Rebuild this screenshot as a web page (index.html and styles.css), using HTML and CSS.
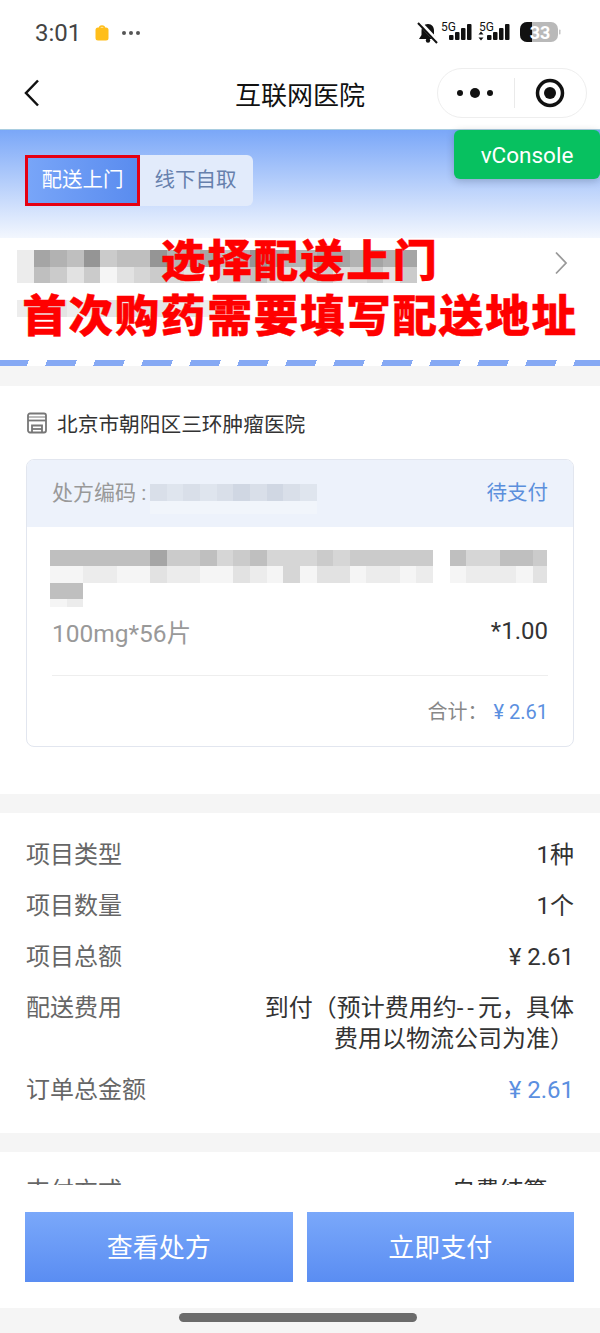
FILE: index.html
```html
<!DOCTYPE html>
<html lang="zh-CN">
<head>
  <meta charset="UTF-8">
  <meta name="viewport" content="width=device-width, initial-scale=1.0">
  <title>互联网医院</title>
  <link rel="stylesheet" href="styles.css">
</head>
<body>
  <div class="status-bar">
    <div class="status-left">
      <span class="time">3:01</span>
      <svg class="bag" width="14" height="16" viewBox="0 0 14 16"><path d="M4.500 3.500a2.500 2.500 0 0 1 5 0" fill="none" stroke="#ffbe1a" stroke-width="1.500"/><rect x="0.500" y="2.500" width="13" height="13" rx="2.500" fill="#ffbe1a"/></svg>
      <span class="status-dots"><i></i><i></i><i></i></span>
    </div>
    <svg class="status-icons" width="146" height="24" viewBox="0 0 146 24">
      <!-- muted bell -->
      <path d="M13 3c4 0 6 3 6 7v4l3 4H4l2.500-4v-4c0-4 2.500-7 6.500-7z" fill="#111"/>
      <circle cx="13" cy="19.500" r="2.200" fill="#111"/>
      <path d="M3 0l19 20" stroke="#fff" stroke-width="4.500"/>
      <path d="M3 2l19 20" stroke="#111" stroke-width="2"/>
      <!-- sim 1 -->
      <text x="26" y="9.500" class="net">5G</text>
      <rect x="34" y="14" width="4.500" height="5" rx="1" fill="#111"/>
      <rect x="40" y="11" width="4.500" height="8" rx="1" fill="#111"/>
      <rect x="46" y="7" width="4.500" height="12" rx="1" fill="#111"/>
      <rect x="52" y="3" width="4.500" height="16" rx="1" fill="#111"/>
      <!-- sim 2 -->
      <text x="64" y="9.500" class="net">5G</text>
      <path d="M66 10.500l2.500 3h-5zM66 19.500l2.500-3h-5z" fill="#111"/>
      <rect x="72" y="14" width="4.500" height="5" rx="1" fill="#111"/>
      <rect x="78" y="11" width="4.500" height="8" rx="1" fill="#111"/>
      <rect x="84" y="7" width="4.500" height="12" rx="1" fill="#111"/>
      <rect x="90" y="3" width="4.500" height="16" rx="1" fill="#111"/>
      <!-- battery -->
      <rect x="105" y="1" width="38" height="20" rx="7" fill="#b9b9b9"/>
      <path d="M112 1h5v20h-5a7 7 0 0 1-7-7V8a7 7 0 0 1 7-7z" fill="#111"/>
      <rect x="144" y="8.500" width="1.500" height="5" rx="0.700" fill="#c4c4c4"/>
      <text x="125" y="17.500" class="batt">33</text>
    </svg>
  </div>

  <div class="nav-bar">
    <svg class="back" width="16" height="28" viewBox="0 0 16 28"><path d="M14 1.500L2 14l12 12.500" fill="none" stroke="#111" stroke-width="2.500"/></svg>
    <div class="nav-title">互联网医院</div>
    <div class="capsule">
      <svg width="38" height="14" viewBox="0 0 38 14"><circle cx="4" cy="7" r="3" fill="#111"/><circle cx="19" cy="7" r="5" fill="#111"/><circle cx="34" cy="7" r="3" fill="#111"/></svg>
      <span class="capsule-line"></span>
      <svg width="30" height="30" viewBox="0 0 30 30"><circle cx="15" cy="15" r="12.500" fill="none" stroke="#111" stroke-width="3.500"/><circle cx="15" cy="15" r="6" fill="#111"/></svg>
    </div>
  </div>

  <div class="content">
    <div class="hero">
      <div class="tabs">
        <div class="tab tab-active">配送上门</div>
        <div class="tab">线下自取</div>
      </div>
    </div>

    <div class="address">
      <div class="mosaic-row">
        <i class="g1"></i><i class="g7"></i><i class="g6"></i><i class="g5"></i><i class="g8"></i><i class="g4"></i><i class="g5"></i><i class="g5"></i><i class="g8"></i><i class="g6"></i><i class="g6"></i><i class="g7"></i><i class="g5"></i><i class="g6"></i><i class="g8"></i><i class="g7"></i><i class="g6"></i><i class="g6"></i><i class="g7"></i><i class="g7"></i><i class="g6"></i><i class="g7"></i><i class="g6"></i><i class="g7"></i>
      </div>
      <div class="mosaic-row">
        <i class="g1"></i><i class="g5"></i><i class="g4"></i><i class="g2"></i><i class="g4"></i><i class="g0"></i><i class="g2"></i><i class="g3"></i><i class="g4"></i><i class="g3"></i><i class="g2"></i><i class="gap"></i><i class="g3"></i><i class="g4"></i><i class="g5"></i><i class="g3"></i><i class="g2"></i><i class="g3"></i><i class="g4"></i><i class="g2"></i><i class="g3"></i><i class="g4"></i><i class="g2"></i><i class="g4"></i>
      </div>
      <div class="mosaic-row address-third">
        <i class="g1"></i><i class="g1"></i><i class="g2"></i><i class="g1"></i><i class="g1"></i><i class="g2"></i><i class="g1"></i><i class="g2"></i><i class="g2"></i><i class="g1"></i><i class="g2"></i><i class="g1"></i>
      </div>
      <svg class="chevron" width="14" height="24" viewBox="0 0 14 24"><path d="M2 1.500L12 12 2 22.500" fill="none" stroke="#999" stroke-width="1.800"/></svg>
    </div>
    <div class="stripes"></div>

    <div class="divider"></div>

    <div class="section order">
      <div class="hospital">
        <svg width="22" height="22" viewBox="0 0 22 22" fill="none" stroke="#777" stroke-width="1.800"><rect x="2" y="1.500" width="18" height="19" rx="2"/><path d="M2 8.500h18"/><path d="M2 5h18" stroke-width="1"/><path d="M6 20.500v-7h10v7"/><path d="M6 17h10"/></svg>
        <span>北京市朝阳区三环肿瘤医院</span>
      </div>
      <div class="card">
        <div class="card-head">
          <div class="rx">
            <span>处方编码 :</span>
            <div class="rx-mosaic">
              <div class="mosaic-row">
                <i class="b2"></i><i class="b1"></i><i class="b2"></i><i class="b1"></i><i class="b2"></i><i class="b3"></i><i class="b2"></i><i class="b3"></i><i class="b2"></i><i class="b1"></i>
              </div>
              <div class="mosaic-row rx-second"><i class="b0"></i><i class="b0"></i><i class="b0"></i><i class="b0"></i><i class="b0"></i><i class="b0"></i><i class="b0"></i><i class="b0"></i><i class="b0"></i><i class="b0"></i></div>
            </div>
          </div>
          <span class="state">待支付</span>
        </div>
        <div class="card-body">
          <div class="mosaic-row">
            <i class="g5"></i><i class="g5"></i><i class="g5"></i><i class="g5"></i><i class="g5"></i><i class="g5"></i><i class="g7"></i><i class="g4"></i><i class="g4"></i><i class="g5"></i><i class="g3"></i><i class="g4"></i><i class="g5"></i><i class="g3"></i><i class="g3"></i><i class="g3"></i><i class="g4"></i><i class="g3"></i><i class="g4"></i><i class="g4"></i><i class="g4"></i><i class="g4"></i><i class="g4"></i><i class="gap"></i><i class="g5"></i><i class="g3"></i><i class="g3"></i><i class="g5"></i><i class="g5"></i><i class="g4"></i>
          </div>
          <div class="mosaic-row">
            <i class="g0"></i><i class="g0"></i><i class="g1"></i><i class="g1"></i><i class="g0"></i><i class="g0"></i><i class="g2"></i><i class="g1"></i><i class="g1"></i><i class="g0"></i><i class="g0"></i><i class="g2"></i><i class="g1"></i><i class="g0"></i><i class="g3"></i><i class="g0"></i><i class="g2"></i><i class="g2"></i><i class="g0"></i><i class="g1"></i><i class="g1"></i><i class="g0"></i><i class="g1"></i><i class="gap"></i><i class="g0"></i><i class="g1"></i><i class="g1"></i><i class="g1"></i><i class="g0"></i><i class="g2"></i>
          </div>
          <div class="mosaic-row"><i class="g5"></i><i class="g5"></i></div>
          <div class="mosaic-row mosaic-low"><i class="g0"></i><i class="g1"></i></div>
          <div class="spec">
            <span class="spec-name">100mg*56片</span>
            <span class="spec-num">*1.00</span>
          </div>
          <div class="sum">
            <span class="sum-label">合计：</span>
            <span class="blue">¥ 2.61</span>
          </div>
        </div>
      </div>
    </div>

    <div class="divider"></div>

    <div class="section rows">
      <div class="row"><span class="row-label">项目类型</span><span>1种</span></div>
      <div class="row"><span class="row-label">项目数量</span><span>1个</span></div>
      <div class="row"><span class="row-label">项目总额</span><span>¥ 2.61</span></div>
      <div class="row"><span class="row-label">配送费用</span><span class="row-value">到付（预计费用约<span class="dash">--</span>元，具体<br>费用以物流公司为准）</span></div>
      <div class="row"><span class="row-label">订单总金额</span><span class="blue">¥ 2.61</span></div>
    </div>

    <div class="divider"></div>

    <div class="section rows rows-pay">
      <div class="row"><span class="row-label">支付方式</span><span class="pay">自费结算 &gt;</span></div>
    </div>
  </div>

  <div class="footer">
    <button class="btn" type="button">查看处方</button>
    <button class="btn" type="button">立即支付</button>
  </div>
  <div class="home-bar"><span></span></div>

  <!-- floating things over the page -->
  <div class="vconsole">vConsole</div>
  <div class="notice">
    <div>选择配送上门</div>
    <div>首次购药需要填写配送地址</div>
  </div>
</body>
</html>
```

FILE: styles.css
```css
* {
  box-sizing: border-box;
}

body {
  margin: 0;
  width: 600px;
  height: 1333px;
  display: flex;
  flex-direction: column;
  position: relative;
  overflow: hidden;
  background: #fff;
  color: #333;
  font-family: Roboto, "Noto Sans CJK SC", sans-serif;
  font-size: 24px;
}

.status-bar {
  height: 65px;
  flex-shrink: 0;
  display: flex;
  justify-content: space-between;
  align-items: center;
  padding: 0 39px 0 35px;
}

.status-left {
  display: flex;
  align-items: center;
}

.time {
  font-size: 24px;
  color: #444;
}

.bag {
  margin-left: 14px;
}

.status-dots {
  display: flex;
  gap: 3px;
  margin-left: 13px;
}

.status-dots i {
  width: 4px;
  height: 4px;
  border-radius: 50%;
  background: #555;
}

.status-icons {
  margin-top: 1px;
}

.net {
  font: 12px Roboto, sans-serif;
  fill: #111;
}

.batt {
  font: bold 18px Roboto, sans-serif;
  fill: #fff;
  text-anchor: middle;
}

.nav-bar {
  height: 64px;
  flex-shrink: 0;
  position: relative;
  display: flex;
  justify-content: space-between;
  align-items: center;
  padding: 0 13px 8px 24px;
}

.nav-title {
  position: absolute;
  left: 0;
  right: 0;
  text-align: center;
  font-size: 26px;
  color: #111;
}

.capsule {
  width: 150px;
  height: 50px;
  display: flex;
  align-items: center;
  justify-content: space-between;
  padding: 0 21px 0 18px;
  border: 1px solid #eee;
  border-radius: 25px;
  background: #fff;
  position: relative;
}

.capsule-line {
  width: 1px;
  height: 30px;
  background: #eaeaea;
}

.content {
  flex: 1;
  min-height: 0;
  overflow: hidden;
}

.hero {
  height: 109px;
  padding: 25px 0 0 25px;
  background: linear-gradient(180deg, #7aa7f8 0%, #f3f7fe 100%);
  border-top: 1px solid #a9cde0;
}

.tabs {
  display: flex;
  width: 228px;
  height: 51px;
  border-radius: 6px;
  background: #e2ebfb;
}

.tab {
  width: 113px;
  padding-right: 2px;
  text-align: center;
  line-height: 51px;
  font-size: 20.500px;
  color: #6680ad;
}

.tab-active {
  width: 115px;
  padding-right: 0;
  line-height: 45px;
  color: #fff;
  border: 3px solid #e60012;
  background: linear-gradient(90deg, #78a5f8, #5a8cef);
}

.address {
  height: 122px;
  padding: 12px 0 0 17px;
  position: relative;
  background: #fff;
}

.address-third {
  margin-top: 16.600px;
  opacity: 0.9;
}

.mosaic-row {
  display: flex;
}

.mosaic-row i {
  display: block;
  width: 16.670px;
  height: 16.670px;
  flex-shrink: 0;
}

.g0 { background: #f5f5f5; }
.g1 { background: #ececec; }
.g2 { background: #e2e2e2; }
.g3 { background: #d6d6d6; }
.g4 { background: #cbcbcb; }
.g5 { background: #bfbfbf; }
.g6 { background: #b2b2b2; }
.g7 { background: #a5a5a5; }
.g8 { background: #959595; }
.b0 { background: #f1f5fb; }
.b1 { background: #dfe5ee; }
.b2 { background: #d9dfe9; }
.b3 { background: #d0d7e3; }

.chevron {
  position: absolute;
  right: 32px;
  top: 13px;
}

.stripes {
  height: 6px;
  background: linear-gradient(110deg, transparent 3px, #86a9f4 3px, #86a9f4 31px, transparent 31px) -4px 0 / 48px 6px;
}

.divider {
  height: 19.500px;
  background: #f5f5f5;
}

.order {
  padding: 22px 26px 47px;
}

.hospital {
  display: flex;
  align-items: center;
  gap: 9px;
  height: 31px;
  margin-bottom: 20px;
  font-size: 20.700px;
}

.card {
  height: 288px;
  border: 1.500px solid #e2e6ef;
  border-radius: 8px;
  overflow: hidden;
}

.card-head {
  height: 67px;
  display: flex;
  justify-content: space-between;
  align-items: center;
  padding: 0 25px 4px;
  background: #edf2fb;
  color: #999;
  font-size: 21px;
}

.rx {
  display: flex;
  align-items: center;
}

.rx > span {
  width: 98px;
  white-space: nowrap;
}

.rx-mosaic {
  height: 30px;
  margin-top: 16px;
}

.rx-second i {
  height: 13px;
}

.state {
  color: #5b8fdc;
  font-size: 20.500px;
}

.card-body {
  padding: 23px 25px 0 23px;
}

.card-body > .mosaic-row {
  width: 497px;
  overflow: hidden;
}

.mosaic-low i {
  height: 8px;
}

.spec {
  display: flex;
  justify-content: space-between;
  align-items: center;
  height: 30px;
  margin: 9px 0 0 2px;
}

.spec-name {
  color: #999;
  font-size: 24.500px;
}

.spec-num {
  font-size: 24px;
}

.sum {
  margin: 29px 0 0 2px;
  padding-top: 20px;
  border-top: 1.500px solid #eee;
  text-align: right;
  font-size: 20px;
  line-height: 32px;
}

.sum-label {
  color: #888;
  margin-right: 1px;
}

.blue {
  color: #5b8fe0;
}

.rows {
  padding: 27px 26px 26.500px;
}

.rows-pay {
  padding-top: 24px;
}

.row {
  display: flex;
  justify-content: space-between;
  line-height: 31px;
  margin-bottom: 20px;
}

.row:last-child {
  margin-bottom: 0;
}

.row-label {
  color: #666;
}

.row-value {
  text-align: right;
  white-space: nowrap;
}

.dash {
  letter-spacing: 4px;
}

.pay {
  padding-right: 8px;
}

.footer {
  height: 123px;
  flex-shrink: 0;
  display: flex;
  gap: 14px;
  padding: 27px 26px 26px 25px;
  background: #fff;
}

.btn {
  flex: 1;
  border: none;
  padding: 0 0 4px;
  font: inherit;
  font-size: 26px;
  color: #fff;
  background: linear-gradient(180deg, #7aa8fa, #5a8df2);
}

.home-bar {
  height: 25px;
  flex-shrink: 0;
  padding: 5px 0 0 179px;
  background: #f5f5f5;
}

.home-bar span {
  display: block;
  width: 238px;
  height: 9px;
  border-radius: 5px;
  background: #6b6b6b;
}

.vconsole {
  position: absolute;
  top: 130px;
  right: 0;
  width: 146px;
  height: 49px;
  line-height: 51px;
  text-align: center;
  color: #fff;
  font-size: 22.500px;
  background: #07c160;
  border-radius: 6px;
  box-shadow: 0 2px 8px rgba(0, 0, 0, 0.2);
}

.notice {
  position: absolute;
  top: 230px;
  left: 0;
  width: 100%;
  text-align: center;
  color: #ff0000;
  font-family: "Noto Sans CJK SC", sans-serif;
  font-weight: 900;
  font-size: 44.500px;
  letter-spacing: 1.800px;
  line-height: 55px;
  -webkit-text-stroke: 0.4px #ff0000;
}
```
